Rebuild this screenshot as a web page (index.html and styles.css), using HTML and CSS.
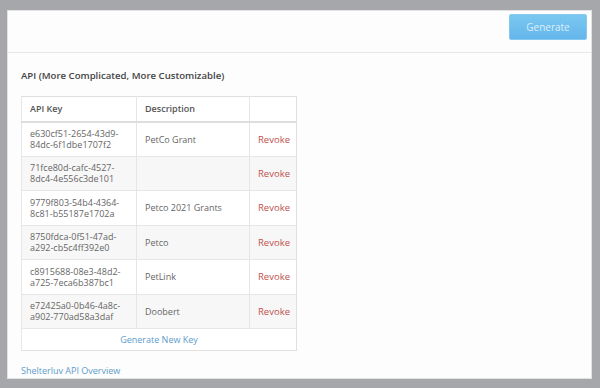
FILE: index.html
```html
<!DOCTYPE html>
<html lang="en">
<head>
    <meta charset="UTF-8">
    <title>API Keys</title>
    <link rel="stylesheet" href="styles.css">
</head>
<body>
<div class="panel">
    <div class="panel-header">
        <button class="btn-generate" disabled>Generate</button>
    </div>
    <div class="panel-body">
        <h4 class="title">API (More Complicated, More Customizable)</h4>
        <table class="keys">
            <thead>
                <tr>
                    <th class="col-key">API Key</th>
                    <th class="col-desc">Description</th>
                    <th class="col-act"></th>
                </tr>
            </thead>
            <tbody>
                <tr>
                    <td>e630cf51-2654-43d9-84dc-6f1dbe1707f2</td>
                    <td>PetCo Grant</td>
                    <td><a class="revoke" href="#">Revoke</a></td>
                </tr>
                <tr>
                    <td>71fce80d-cafc-4527-8dc4-4e556c3de101</td>
                    <td></td>
                    <td><a class="revoke" href="#">Revoke</a></td>
                </tr>
                <tr>
                    <td>9779f803-54b4-4364-8c81-b55187e1702a</td>
                    <td>Petco 2021 Grants</td>
                    <td><a class="revoke" href="#">Revoke</a></td>
                </tr>
                <tr>
                    <td>8750fdca-0f51-47ad-a292-cb5c4ff392e0</td>
                    <td>Petco</td>
                    <td><a class="revoke" href="#">Revoke</a></td>
                </tr>
                <tr>
                    <td>c8915688-08e3-48d2-a725-7eca6b387bc1</td>
                    <td>PetLink</td>
                    <td><a class="revoke" href="#">Revoke</a></td>
                </tr>
                <tr>
                    <td>e72425a0-0b46-4a8c-a902-770ad58a3daf</td>
                    <td>Doobert</td>
                    <td><a class="revoke" href="#">Revoke</a></td>
                </tr>
            </tbody>
            <tfoot>
                <tr>
                    <td colspan="3"><a class="new-key" href="#">Generate New Key</a></td>
                </tr>
            </tfoot>
        </table>
        <a class="overview" href="#">Shelterluv API Overview</a>
    </div>
</div>
</body>
</html>
```

FILE: styles.css
```css
* {
    margin: 0;
    padding: 0;
    box-sizing: border-box;
    font-family: 'Open Sans', 'DejaVu Sans', sans-serif;
}

html, body {
    height: 100%;
}

body {
    background: #a6a7aa;
    padding: 10px 8px 9px 7px;
    color: #555;
}

.panel {
    height: 100%;
    background: #fdfdfd;
    border: 1px solid #e2e2e2;
}

.panel-header {
    display: flex;
    justify-content: flex-end;
    height: 42px;
    padding: 3px 4px 0 0;
    border-bottom: 1px solid #e8e8e8;
}

.btn-generate {
    width: 78px;
    height: 26px;
    border: 1px solid #86c8ef;
    border-radius: 2px;
    background: linear-gradient(#7ac8f1, #64b5ea);
    color: #dcedf9;
    font-size: 10px;
}

.panel-body {
    padding: 16px 13px 0;
}

.title {
    font-size: 9.6px;
    font-weight: 600;
    color: #444;
    margin-bottom: 14px;
}

.keys {
    width: 276px;
    table-layout: fixed;
    border-collapse: collapse;
    border: 1px solid #e0e0e0;
    font-size: 9px;
    line-height: 11px;
    background: #fff;
}

.keys th {
    height: 25px;
    text-align: left;
    font-weight: 600;
    color: #555;
    padding: 0 8px;
    border-left: 1px solid #e6e6e6;
    border-bottom: 2px solid #dedede;
}

.col-key {
    width: 115px;
}

.col-desc {
    width: 113px;
}

.keys td {
    height: 34.5px;
    padding: 0 8px;
    border-left: 1px solid #e6e6e6;
    border-top: 1px solid #e6e6e6;
    vertical-align: middle;
    color: #666;
}

.keys tbody tr:nth-child(even) td {
    background: #f7f7f7;
}

.revoke {
    color: #c0504d;
    text-decoration: none;
    font-size: 9.5px;
}

.keys tfoot td {
    height: 22px;
    text-align: center;
}

.new-key {
    color: #5c9ccc;
    text-decoration: none;
}

.overview {
    display: inline-block;
    margin-top: 13px;
    color: #5c9ccc;
    text-decoration: none;
    font-size: 9px;
}
```
